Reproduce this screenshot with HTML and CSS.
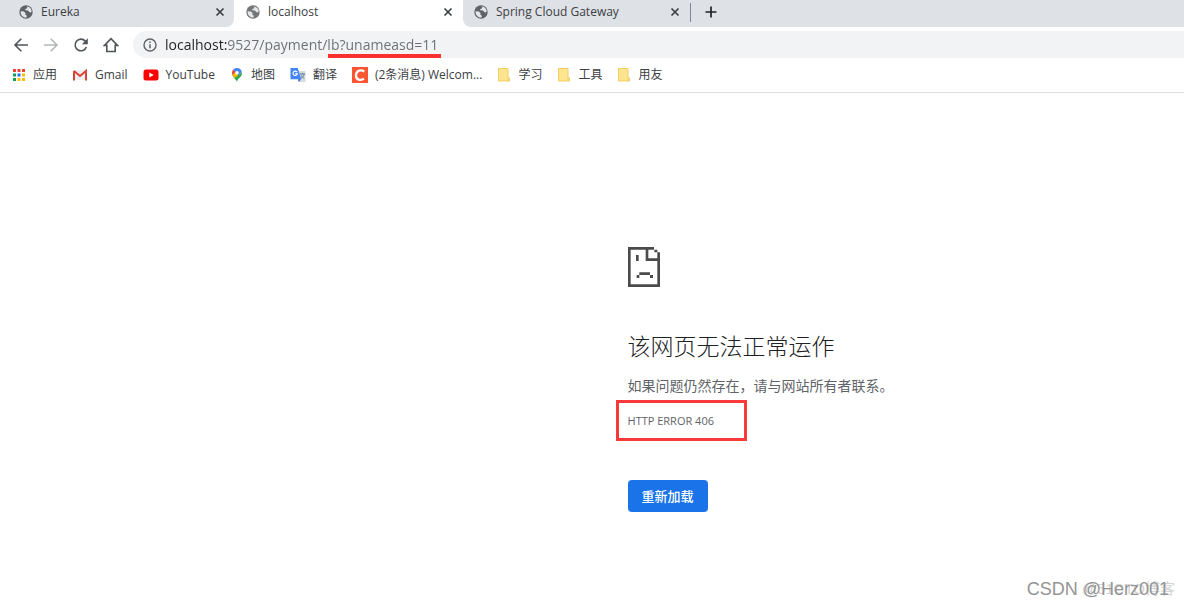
FILE: index.html
```html
<!DOCTYPE html>
<html lang="zh-CN">
<head>
<meta charset="utf-8">
<title>localhost</title>
<link rel="stylesheet" href="styles.css">
</head>
<body>
<svg class="defs" aria-hidden="true">
  <symbol id="globe" viewBox="0 0 14 14">
    <circle cx="7" cy="7" r="6.7" fill="currentColor"/>
    <path class="land" d="M1.6 6.2 5 6.6l1.6 1.6-.3 1.6 1.6.9-.4 1.8C4 12.8 1.3 10 1.6 6.200zM7.200 1.500l1.200.6-.5 1.300-1.700.5.200 1.300 2.600.200 1.200 1.600 1.800.400.7-1.400C12.300 3.400 10 1.300 7.200 1.500z"/>
  </symbol>
  <symbol id="cross" viewBox="0 0 10 10"><path d="m1.500 1.500 7 7m0-7-7 7" fill="none" stroke="#3c4043" stroke-width="1.700"/></symbol>
  <symbol id="folder" viewBox="0 0 13 14"><path d="M1 .5h9.500V10H12v3H1z" fill="#ffe58f" stroke="#f0cd62"/><path d="M10.500 10v3" stroke="#f0cd62"/></symbol>
</svg>

<nav class="tabs" aria-label="标签页">
  <div class="tab tab-before">
    <svg class="favicon"><use href="#globe"/></svg><span class="tab-title">Eureka</span>
    <button class="close" aria-label="关闭"><svg><use href="#cross"/></svg></button>
  </div>
  <div class="tab tab-active">
    <svg class="favicon"><use href="#globe"/></svg><span class="tab-title">localhost</span>
    <button class="close" aria-label="关闭"><svg><use href="#cross"/></svg></button>
  </div>
  <div class="tab tab-after">
    <svg class="favicon"><use href="#globe"/></svg><span class="tab-title">Spring Cloud Gateway</span>
    <button class="close" aria-label="关闭"><svg><use href="#cross"/></svg></button>
  </div>
  <div class="tab-end">
    <button class="new-tab" aria-label="新标签页"><svg viewBox="0 0 12 12"><path d="M6 .5v11M.5 6h11" stroke="#202124" stroke-width="1.700"/></svg></button>
  </div>
</nav>

<div class="toolbar">
  <button class="tool" aria-label="后退"><svg viewBox="0 0 16 16"><path d="M15 8H2m6.300-6.300L2 8l6.300 6.300"/></svg></button>
  <button class="tool tool-off" aria-label="前进"><svg viewBox="0 0 16 16"><path d="M1 8h13M7.700 1.700 14 8l-6.300 6.300"/></svg></button>
  <button class="tool" aria-label="重新加载"><svg viewBox="0 0 16 16"><path d="M13.400 10A5.800 5.800 0 1 1 12.300 4.100l1 1"/><path class="solid" d="M14.800 1.200v6H8.800z"/></svg></button>
  <button class="tool" aria-label="主页"><svg viewBox="0 0 16 16"><path d="M1.500 8.400h2.300v6.100h8.400V8.400h2.300L8 1.700z"/></svg></button>
  <div class="omnibox">
    <svg class="info" viewBox="0 0 14 14"><circle cx="7" cy="7" r="6" fill="none" stroke="#5f6368" stroke-width="1.400"/><path d="M7 6.200v4M7 3.500v1.500" stroke="#5f6368" stroke-width="1.500"/></svg>
    <input class="address" type="text" aria-label="地址" value="localhost:9527/payment/lb?unameasd=11">
    <span class="underline"></span>
  </div>
</div>

<nav class="bookmarks" aria-label="书签">
  <a href="#" class="bookmark"><svg class="mark" viewBox="0 0 14 14"><g fill="#ea4335"><path d="M1 1h3v3H1zM5.500 1h3v3h-3zM10 1h3v3h-3z"/></g><path d="M1 5.500h3v3H1zM1 10h3v3H1z" fill="#0f9d58"/><path d="M5.500 5.500h3v3h-3z" fill="#1a73e8"/><path d="M10 5.500h3v3h-3zM5.500 10h3v3h-3zM10 10h3v3h-3z" fill="#fbbc04"/></svg>应用</a>
  <a href="#" class="bookmark"><svg class="mark wide" viewBox="0 0 16 14"><path d="M1 2h14v10H1z" fill="#eceff1"/><path d="m2 3 6 5 6-5v9.500M2 12.500V3" fill="none" stroke="#db4437" stroke-width="2"/></svg>Gmail</a>
  <a href="#" class="bookmark"><svg class="mark wide" viewBox="0 0 16 14"><rect x=".5" y="1.500" width="15" height="11" rx="2.500" fill="#f00"/><path d="m6.300 4.500 4.500 2.500-4.500 2.500z" fill="#fff"/></svg>YouTube</a>
  <a href="#" class="bookmark"><svg class="mark" viewBox="0 0 14 14"><path d="M7 14c-.5-2.600-4-4-4.600-7L5 4.500l4 2L11.800 4C13 9 7.700 9.500 7 14z" fill="#34a853"/><path d="M2 5a5 5 0 0 1 1.300-3.400L6 4 4.300 8.800C3 7.700 2 6.500 2 5z" fill="#ea4335"/><path d="m2.500 7.200 4-4.500 2.800 3.500L4.500 10z" fill="#fbbc04"/><path d="M3.300 1.600C5.500-.8 10.500-.4 11.800 3.500L8.500 7.300 5 3.600z" fill="#4285f4"/><circle cx="7" cy="4.800" r="1.800" fill="#fff"/></svg>地图</a>
  <a href="#" class="bookmark"><svg class="mark wide" viewBox="0 0 16 14"><path d="M6 3h9.500v11H9z" fill="#d8dce0"/><path d="M.5 0h7.300l3.400 11.200H.5z" fill="#4285f4"/><path d="m8 11.200 3.200 0L8.700 14z" fill="#3367d6"/><path d="M7.200 4.200a2.200 2.200 0 1 0 .2 1.700H5.200" fill="none" stroke="#fff" stroke-width="1.100"/><path d="M10 6h5m-2.500-1.200V6m1.700 0c-.4 2-1.700 3.300-3.200 4.200m0-3 3 3.500" fill="none" stroke="#5f7f96"/></svg>翻译</a>
  <a href="#" class="bookmark"><svg class="mark logo" viewBox="0 0 16 16"><path d="M0 0h16v16H0z" fill="#fc5531"/><path d="M12.300 4.500C9.500 2.600 4.300 3 4 8s5 6 8 3.700" fill="none" stroke="#fff" stroke-width="2.300"/></svg>(2条消息) Welcom...</a>
  <a href="#" class="bookmark"><svg class="mark"><use href="#folder"/></svg>学习</a>
  <a href="#" class="bookmark"><svg class="mark"><use href="#folder"/></svg>工具</a>
  <a href="#" class="bookmark"><svg class="mark"><use href="#folder"/></svg>用友</a>
</nav>

<main class="page">
  <svg class="sad" viewBox="0 0 96 120" aria-hidden="true"><path fill="#4b4b4b" d="M0 0h78v8H61v26h27V16h8v104H0zM8 8v104h80V42H53V8zM79 8h9v8h-9zM24 24h8v18h-8zM34 76h32v8H34zM26 84h8v9h-8zM66 84h9v9h-9z" fill-rule="evenodd"/></svg>
  <h1 class="heading">该网页无法正常运作</h1>
  <p class="message">如果问题仍然存在，请与网站所有者联系。</p>
  <p class="code">HTTP ERROR 406<span class="frame"></span></p>
  <button class="reload">重新加载</button>
</main>

<div class="watermarks"><span class="mark-back">@51CTO博客</span><span class="mark-front">CSDN @Herz001</span></div>
</body>
</html>
```
FILE: styles.css
```css
* { box-sizing: border-box; }
body {
  position: relative;
  display: flex;
  flex-direction: column;
  min-height: 100vh;
  margin: 0;
  background: #fff;
  color: #3c4043;
  font: 12px/16px "Open Sans", "Noto Sans CJK SC", sans-serif;
}
button { padding: 0; border: 0; background: none; font: inherit; }
svg { display: block; flex: none; }
.defs { position: absolute; width: 0; height: 0; }

.tabs { display: flex; height: 27px; background: #fff; }
.tab { display: flex; align-items: center; width: 227px; padding: 0 10px 3px 12px; background: #dee1e6; }
.tab-before { width: 234px; padding: 0 9px 3px 19px; border-bottom-right-radius: 8px; }
.tab-active { width: 229px; background: #fff; }
.tab-after { border-bottom-left-radius: 8px; padding-left: 11px; }
.favicon { width: 14px; height: 14px; margin-right: 8px; color: #5f6368; }
.tab-active .favicon { color: #757575; }
.land { fill: #e4e6e9; }
.tab-title { flex: 1; white-space: nowrap; }
.close svg { width: 10px; height: 10px; }
.tab-end { display: flex; flex: 1; align-items: center; padding-bottom: 3px; background: #dee1e6; }
.tab-end::before { content: ""; width: 1px; height: 19px; margin-right: 14px; background: #80868b; }
.new-tab svg { width: 12px; height: 12px; }

.toolbar { display: flex; align-items: center; gap: 14px; height: 35px; padding-left: 13px; }
.tool svg { width: 16px; height: 16px; fill: none; stroke: #50555a; stroke-width: 1.600; }
.tool-off svg { stroke: #b4b7ba; }
.tool .solid { fill: #50555a; stroke: none; }
.omnibox {
  position: relative;
  display: flex;
  flex: 1;
  align-items: center;
  gap: 8px;
  height: 27px;
  padding-left: 10px;
  border-radius: 14px 0 0 14px;
  background: #f1f3f4;
}
.info { width: 14px; height: 14px; }
.address {
  flex: 1;
  height: 24px;
  padding: 0;
  border: 0;
  outline: 0;
  background: linear-gradient(90deg, #202124 62px, #6b6f74 62px);
  background-clip: text;
  -webkit-background-clip: text;
  -webkit-text-fill-color: transparent;
  color: #202124;
  font: 14px/24px "Open Sans", sans-serif;
}
.underline { position: absolute; left: 195px; bottom: 0; width: 113px; height: 4px; background: #f93030; }

.bookmarks { display: flex; align-items: center; gap: 15px; height: 31px; padding: 0 12px 4px; border-bottom: 1px solid #dcdee0; }
.bookmark { display: flex; align-items: center; gap: 7px; color: inherit; text-decoration: none; white-space: nowrap; }
.mark { width: 14px; height: 14px; }
.wide { width: 16px; }
.logo { width: 16px; height: 16px; }

.page { padding: 154px 0 24px 53%; }
.sad { width: 32px; height: 40px; }
.heading { margin: 41px 0 0; color: #202124; font-size: 23px; font-weight: 300; line-height: 36px; }
.message { margin: 10px 0 0; color: #5f6368; font-size: 14px; line-height: 24px; }
.code { position: relative; width: max-content; margin: 14px 0 0; color: #5f6368; font-size: 11px; line-height: 18px; }
.frame { position: absolute; top: -12px; left: -12px; width: 131px; height: 41px; border: 3px solid #f93a3a; }
.reload { display: block; width: 80px; height: 32px; margin-top: 50px; border-radius: 4px; background: #1a73e8; color: #fff; font-size: 13px; font-weight: 500; }

.watermarks { position: absolute; right: 9px; bottom: 4px; display: grid; align-items: center; justify-items: end; font-family: "Liberation Sans", "Noto Sans CJK SC", sans-serif; line-height: 24px; }
.mark-back, .mark-front { grid-area: 1 / 1; }
.mark-back { color: #d4d4d4; font-size: 15px; }
.mark-front { padding-right: 6px; color: #949494; font-size: 18px; }
```
